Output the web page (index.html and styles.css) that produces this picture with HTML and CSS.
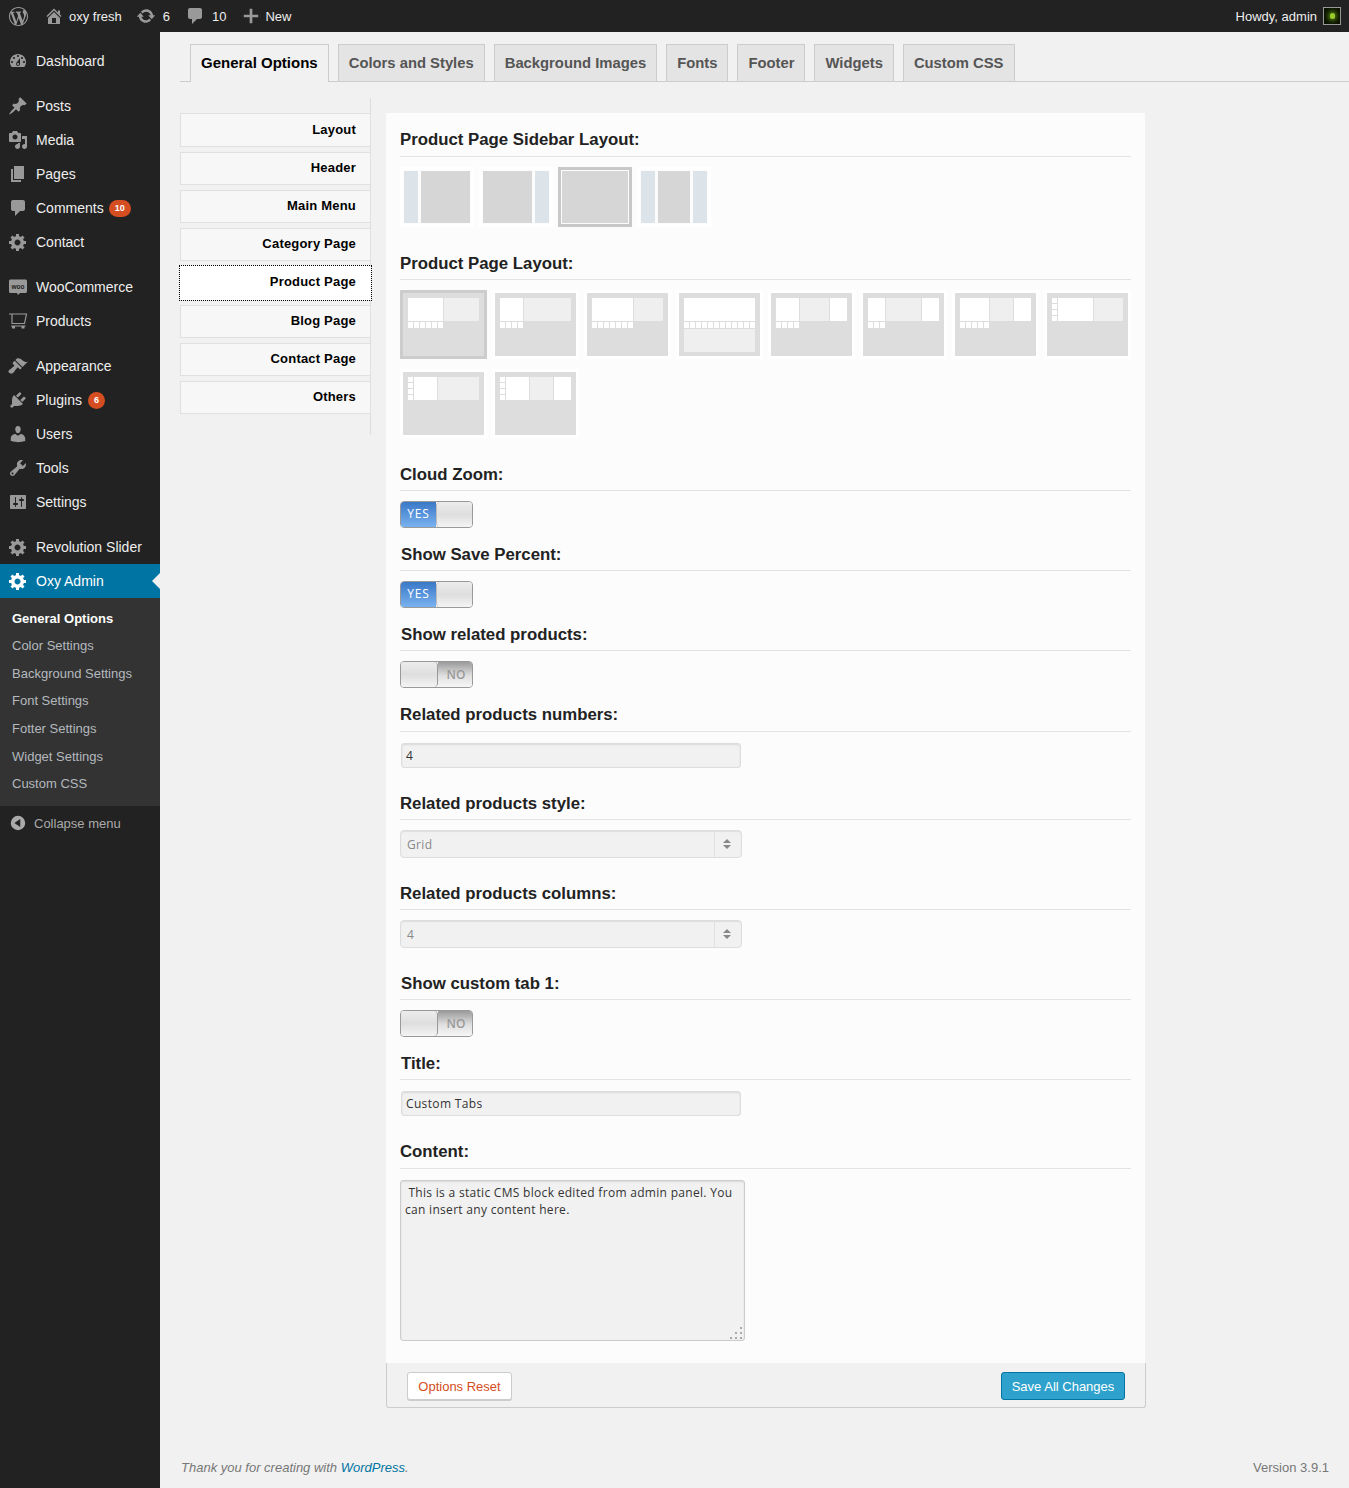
FILE: index.html
```html
<!DOCTYPE html>
<html lang="en">
<head>
<meta charset="utf-8">
<title>Oxy Admin</title>
<link rel="stylesheet" href="styles.css">
</head>
<body>
<svg class="defs" width="0" height="0" aria-hidden="true">
<symbol id="i-wp" viewBox="0 0 20 20"><path d="M20 10c0-5.51-4.49-10-10-10C4.48 0 0 4.49 0 10c0 5.52 4.48 10 10 10 5.51 0 10-4.48 10-10zM7.78 15.37L4.37 6.22c.55-.02 1.17-.08 1.17-.08.5-.06.44-1.13-.06-1.11 0 0-1.45.11-2.37.11-.18 0-.37 0-.58-.01C4.12 2.69 6.87 1.11 10 1.11c2.33 0 4.45.87 6.05 2.34-.68-.11-1.65.39-1.65 1.58 0 .74.45 1.36.9 2.1.35.61.55 1.36.55 2.46 0 1.49-1.4 5-1.4 5l-3.03-8.37c.54-.02.82-.17.82-.17.5-.05.44-1.25-.06-1.22 0 0-1.44.12-2.38.12-.87 0-2.33-.12-2.33-.12-.5-.03-.56 1.2-.06 1.22l.92.08 1.26 3.41zM17.41 10c.24-.64.74-1.87.43-4.25.7 1.29 1.05 2.71 1.05 4.25 0 3.29-1.73 6.24-4.4 7.78.97-2.59 1.94-5.2 2.92-7.78zM6.1 18.09C3.12 16.65 1.11 13.53 1.11 10c0-1.3.23-2.48.72-3.59C3.25 10.3 4.67 14.2 6.1 18.09zm4.03-6.63l2.58 6.98c-.86.29-1.76.45-2.71.45-.79 0-1.57-.11-2.29-.33.81-2.38 1.62-4.74 2.42-7.1z"/></symbol>
<symbol id="i-home" viewBox="0 0 20 20"><path d="M16 8.5l1.53 1.53-1.06 1.06L10 4.62l-6.47 6.47-1.06-1.06L10 2.5l4 4v-2h2v4zm-6-2.46l6 5.99V18H4v-5.97zM12 17v-5H8v5h4z"/></symbol>
<symbol id="i-update" viewBox="0 0 20 20"><path d="M10.2 3.28c3.53 0 6.43 2.61 6.92 6h2.08l-3.5 4-3.5-4h2.32c-.45-1.97-2.21-3.45-4.32-3.45-1.45 0-2.73.71-3.54 1.78L4.95 5.66C6.23 4.2 8.11 3.28 10.2 3.28zm-.4 13.44c-3.52 0-6.43-2.61-6.92-6H.8l3.5-4c1.17 1.33 2.33 2.67 3.5 4H5.48c.45 1.97 2.21 3.45 4.32 3.45 1.45 0 2.73-.71 3.54-1.78l1.71 1.95c-1.28 1.46-3.15 2.38-5.25 2.38z"/></symbol>
<symbol id="i-comment" viewBox="0 0 20 20"><path d="M5 2h10c1.1 0 2 .9 2 2v7c0 1.1-.9 2-2 2h-3l-5 5v-5H5c-1.1 0-2-.9-2-2V4c0-1.1.9-2 2-2z"/></symbol>
<symbol id="i-plus" viewBox="0 0 20 20"><path d="M18 8.5v3h-6.5V18h-3v-6.5H2v-3h6.500V2h3v6.500z"/></symbol>
<symbol id="i-dash" viewBox="0 0 20 20"><path d="M3.76 16h12.48c1.1-1.37 1.76-3.11 1.76-5 0-4.42-3.58-8-8-8s-8 3.58-8 8c0 1.89.66 3.63 1.76 5zM10 4c.55 0 1 .45 1 1s-.45 1-1 1-1-.45-1-1 .45-1 1-1zM6 6c.55 0 1 .45 1 1s-.45 1-1 1-1-.45-1-1 .45-1 1-1zm8 0c.55 0 1 .45 1 1s-.45 1-1 1-1-.45-1-1 .45-1 1-1zm-5.37 5.550L12 7v6c0 1.100-.9 2-2 2s-2-.9-2-2c0-.57.24-1.080.63-1.450zM4 10c.55 0 1 .45 1 1s-.45 1-1 1-1-.45-1-1 .45-1 1-1zm12 0c.55 0 1 .45 1 1s-.45 1-1 1-1-.45-1-1 .45-1 1-1zm-5 3c0-.55-.45-1-1-1s-1 .45-1 1 .45 1 1 1 1-.45 1-1z"/></symbol>
<symbol id="i-pin" viewBox="0 0 20 20"><path d="M10.44 3.020l1.820-1.820 6.360 6.350-1.830 1.820c-1.050-.68-2.480-.57-3.410.36l-.75.75c-.92.93-1.040 2.350-.35 3.410l-1.830 1.820-2.410-2.410-2.800 2.790c-.42.42-3.380 2.710-3.800 2.290s1.860-3.390 2.280-3.810l2.790-2.790L4.100 9.360l1.830-1.820c1.050.69 2.480.57 3.400-.36l.75-.75c.93-.92 1.050-2.350.36-3.410z"/></symbol>
<symbol id="i-media" viewBox="0 0 20 20"><path d="M13 11V4c0-.55-.45-1-1-1h-1.670L9 1H5L3.670 3H2c-.55 0-1 .45-1 1v7c0 .55.45 1 1 1h10c.55 0 1-.45 1-1zM7 4.500c1.380 0 2.500 1.120 2.500 2.500S8.380 9.500 7 9.500 4.500 8.380 4.500 7 5.620 4.500 7 4.500zM14 6h5v10.500c0 1.380-1.120 2.500-2.500 2.500S14 17.880 14 16.500s1.120-2.500 2.500-2.500c.17 0 .34.020.5.050V9h-3V6zm-4 8.050V13h2v3.500c0 1.380-1.120 2.500-2.500 2.500S7 17.880 7 16.500 8.120 14 9.500 14c.17 0 .34.020.5.050z"/></symbol>
<symbol id="i-page" viewBox="0 0 20 20"><path d="M6 15V2h10v13H6zm-1 1h8v2H3V5h2v11z"/></symbol>
<symbol id="i-gear" viewBox="0 0 20 20"><path d="M18 12h-2.180c-.17.7-.44 1.350-.81 1.930l1.540 1.540-2.100 2.100-1.540-1.540c-.58.36-1.230.63-1.910.79V19H8v-2.180c-.68-.16-1.330-.43-1.910-.79l-1.540 1.540-2.120-2.120 1.540-1.540c-.36-.58-.63-1.230-.79-1.910H1V9.030h2.170c.16-.7.44-1.350.8-1.940L2.430 5.550l2.100-2.100 1.540 1.540c.58-.37 1.240-.64 1.930-.81V2h3v2.180c.68.16 1.330.43 1.910.79l1.540-1.540 2.120 2.120-1.540 1.540c.36.59.64 1.240.8 1.940H18V12zm-8.500 1.500c1.660 0 3-1.340 3-3s-1.340-3-3-3-3 1.340-3 3 1.340 3 3 3z"/></symbol>
<symbol id="i-cart" viewBox="0 0 20 20"><path fill="none" stroke="currentColor" stroke-width="1.200" d="M1 3h3v9.500h12.500l2-9.500H4M3 15h14.500"/><rect x="4" y="15" width="3" height="2.500"/><rect x="13.500" y="15" width="3" height="2.500"/></symbol>
<symbol id="i-brush" viewBox="0 0 20 20"><path d="M14.480 11.060L7.410 3.990l1.500-1.500c.5-.56 2.300-.47 3.510.32 1.210.8 1.430 1.280 2.910 2.100 1.180.64 2.450 1.260 4.450.85zm-.71.71L6.700 4.700 4.930 6.470c-.39.39-.39 1.020 0 1.410l1.060 1.060c.39.39.39 1.030 0 1.420-.6.6-1.430 1.110-2.210 1.690-.35.26-.7.53-1.010.84C1.430 13.230.4 14.89.4 15.500c0 .83 1.270 2.100 3.100 2.100.76 0 2.040-1.130 3.070-2.440.28-.35.55-.71.8-1.070.59-.78 1.090-1.600 1.690-2.200.39-.39 1.030-.39 1.420 0l1.060 1.060c.39.39 1.020.39 1.410 0z"/></symbol>
<symbol id="i-plug" viewBox="0 0 20 20"><path d="M13.110 4.360L9.870 7.600 8 5.730l3.240-3.240c.35-.34 1.050-.2 1.560.32.52.51.66 1.210.31 1.550zm-8 1.770l.91-1.120 9.010 9.010-1.190.84c-.71.71-2.630 1.160-3.820 1.160H6.140L4.900 17.260c-.59.59-1.540.59-2.120 0-.59-.58-.59-1.530 0-2.120l1.240-1.240v-3.880c0-1.130.4-3.190 1.090-3.890zm7.260 3.970l3.240-3.240c.34-.35 1.040-.21 1.550.31.52.51.66 1.210.31 1.550l-3.240 3.250z"/></symbol>
<symbol id="i-user" viewBox="0 0 20 20"><path d="M10 9.250c-2.270 0-2.730-3.440-2.730-3.440C7 4.020 7.820 2 9.970 2c2.160 0 2.980 2.020 2.710 3.810 0 0-.41 3.440-2.680 3.440zm0 2.570L12.720 10c2.390 0 4.520 2.330 4.520 4.530v2.490s-3.650 1.130-7.240 1.130c-3.650 0-7.240-1.130-7.240-1.130v-2.490c0-2.250 1.940-4.480 4.470-4.480z"/></symbol>
<symbol id="i-tool" viewBox="0 0 20 20"><path d="M16.680 9.770c-1.340 1.340-3.300 1.670-4.950.99l-5.410 6.520c-.99.99-2.590.99-3.580 0s-.99-2.590 0-3.570l6.520-5.420c-.68-1.650-.35-3.610.99-4.950 1.280-1.280 3.120-1.620 4.720-1.060l-2.890 2.890 2.820 2.820 2.860-2.870c.53 1.580.18 3.390-1.080 4.650zM3.810 16.210c.4.39 1.040.39 1.430 0 .4-.4.4-1.040 0-1.430-.39-.4-1.030-.4-1.430 0-.39.39-.39 1.030 0 1.430z"/></symbol>
<symbol id="i-set" viewBox="0 0 20 20"><path d="M18 16V4c0-.55-.45-1-1-1H3c-.55 0-1 .45-1 1v12c0 .55.45 1 1 1h14c.55 0 1-.45 1-1zM8 11h1c.55 0 1 .45 1 1s-.45 1-1 1H8v1.500c0 .28-.22.5-.5.5s-.5-.22-.5-.5V13H6c-.55 0-1-.45-1-1s.45-1 1-1h1V5.500c0-.28.22-.5.5-.5s.5.22.5.5V11zm5-2h-1c-.55 0-1-.45-1-1s.45-1 1-1h1V5.500c0-.28.22-.5.5-.5s.5.22.5.5V7h1c.55 0 1 .45 1 1s-.45 1-1 1h-1v5.500c0 .28-.22.5-.5.5s-.5-.22-.5-.5V9z"/></symbol>
<symbol id="i-back" viewBox="0 0 20 20"><path fill-rule="evenodd" d="M10 2a8 8 0 1 1 0 16a8 8 0 0 1 0-16zM12.500 5.500L6 10l6.500 4.500z"/></symbol>
</svg>

<header class="topbar">
  <div class="top-left">
    <svg class="tb-icon tb-wp"><use href="#i-wp"/></svg>
    <span class="tb-item tb-site"><svg class="tb-icon"><use href="#i-home"/></svg>oxy fresh</span>
    <span class="tb-item tb-updates"><svg class="tb-icon"><use href="#i-update"/></svg>6</span>
    <span class="tb-item tb-comments"><svg class="tb-icon"><use href="#i-comment"/></svg>10</span>
    <span class="tb-item tb-new"><svg class="tb-icon"><use href="#i-plus"/></svg>New</span>
  </div>
  <div class="top-right">Howdy, admin<span class="avatar"><span class="avatar-dot"></span></span></div>
</header>

<div class="layout">
  <nav class="sidebar">
    <ul class="menu">
      <li class="mi"><svg class="mi-icon"><use href="#i-dash"/></svg>Dashboard</li>
      <li class="mi sep"><svg class="mi-icon"><use href="#i-pin"/></svg>Posts</li>
      <li class="mi"><svg class="mi-icon"><use href="#i-media"/></svg>Media</li>
      <li class="mi"><svg class="mi-icon"><use href="#i-page"/></svg>Pages</li>
      <li class="mi"><svg class="mi-icon"><use href="#i-comment"/></svg>Comments<span class="badge badge-wide">10</span></li>
      <li class="mi"><svg class="mi-icon"><use href="#i-gear"/></svg>Contact</li>
      <li class="mi sep"><svg class="mi-icon" viewBox="0 0 20 20"><path d="M2.500 2.500h15c.8 0 1.500.7 1.500 1.500v10.500c0 .8-.7 1.500-1.500 1.500H12l-2 2-1-2H2.500c-.8 0-1.500-.7-1.500-1.500V4c0-.8.7-1.500 1.500-1.500z"/><text class="woo-mark" x="10" y="11.500" text-anchor="middle">woo</text></svg>WooCommerce</li>
      <li class="mi"><svg class="mi-icon"><use href="#i-cart"/></svg>Products</li>
      <li class="mi sep"><svg class="mi-icon"><use href="#i-brush"/></svg>Appearance</li>
      <li class="mi"><svg class="mi-icon"><use href="#i-plug"/></svg>Plugins<span class="badge">6</span></li>
      <li class="mi"><svg class="mi-icon"><use href="#i-user"/></svg>Users</li>
      <li class="mi"><svg class="mi-icon"><use href="#i-tool"/></svg>Tools</li>
      <li class="mi"><svg class="mi-icon"><use href="#i-set"/></svg>Settings</li>
      <li class="mi sep"><svg class="mi-icon"><use href="#i-gear"/></svg>Revolution Slider</li>
      <li class="mi mi-current"><svg class="mi-icon"><use href="#i-gear"/></svg>Oxy Admin</li>
    </ul>
    <ul class="submenu">
      <li class="sub sub-current">General Options</li>
      <li class="sub">Color Settings</li>
      <li class="sub">Background Settings</li>
      <li class="sub">Font Settings</li>
      <li class="sub">Fotter Settings</li>
      <li class="sub">Widget Settings</li>
      <li class="sub">Custom CSS</li>
    </ul>
    <div class="collapse"><svg class="collapse-icon"><use href="#i-back"/></svg>Collapse menu</div>
  </nav>

  <main class="main">
    <div class="tabs">
      <span class="tab tab-active">General Options</span>
      <span class="tab">Colors and Styles</span>
      <span class="tab">Background Images</span>
      <span class="tab">Fonts</span>
      <span class="tab">Footer</span>
      <span class="tab">Widgets</span>
      <span class="tab">Custom CSS</span>
    </div>

    <div class="panels">
      <ul class="vtabs">
        <li class="vtab vtab-first">Layout</li>
        <li class="vtab">Header</li>
        <li class="vtab">Main Menu</li>
        <li class="vtab">Category Page</li>
        <li class="vtab vtab-active">Product Page</li>
        <li class="vtab">Blog Page</li>
        <li class="vtab">Contact Page</li>
        <li class="vtab">Others</li>
      </ul>

      <div class="content">
        <div class="card">
          <section class="field gap-19">
            <h3 class="label label-up">Product Page Sidebar Layout:</h3>
            <div class="side-tiles">
              <div class="stile"><span class="sb"></span><span class="mainc w49"></span></div>
              <div class="stile"><span class="mainc w49"></span><span class="sb"></span></div>
              <div class="stile stile-on"><span class="mainc w66"></span></div>
              <div class="stile"><span class="sb"></span><span class="mainc w32"></span><span class="sb"></span></div>
            </div>
          </section>

          <section class="field gap-19">
            <h3 class="label">Product Page Layout:</h3>
            <div class="layout-tiles">
              <div class="ltile ltile-on">
                <div class="lrow"><span class="pw w35"></span><span class="pl w35"></span></div>
                <div class="thumbs w35"></div>
              </div>
              <div class="ltile">
                <div class="lrow"><span class="pw w23"></span><span class="pl w47"></span></div>
                <div class="thumbs w23"></div>
              </div>
              <div class="ltile">
                <div class="lrow"><span class="pw w41"></span><span class="pl w29"></span></div>
                <div class="thumbs w41"></div>
              </div>
              <div class="ltile">
                <div class="lrow"><span class="pw w71"></span></div>
                <div class="thumbs w71"></div>
                <div class="lrow"><span class="pl w71"></span></div>
              </div>
              <div class="ltile">
                <div class="lrow"><span class="pw w23"></span><span class="pl w29"></span><span class="pw w17"></span></div>
                <div class="thumbs w23"></div>
              </div>
              <div class="ltile">
                <div class="lrow"><span class="pw w17"></span><span class="pl w35"></span><span class="pw w17"></span></div>
                <div class="thumbs w17"></div>
              </div>
              <div class="ltile">
                <div class="lrow"><span class="pw w29"></span><span class="pl w23"></span><span class="pw w17"></span></div>
                <div class="thumbs w29"></div>
              </div>
              <div class="ltile">
                <div class="lrow"><span class="vthumbs"></span><span class="pw w35"></span><span class="pl w29"></span></div>
              </div>
              <div class="ltile">
                <div class="lrow"><span class="vthumbs"></span><span class="pw w23"></span><span class="pl w41"></span></div>
              </div>
              <div class="ltile">
                <div class="lrow"><span class="vthumbs"></span><span class="pw w23"></span><span class="pl w23"></span><span class="pw w17"></span></div>
              </div>
            </div>
          </section>

          <section class="field gap-9">
            <h3 class="label">Cloud Zoom:</h3>
            <div class="toggle toggle-yes"><span class="t-yes">YES</span><span class="t-knob"></span></div>
          </section>
          <section class="field gap-9">
            <h3 class="label label-in">Show Save Percent:</h3>
            <div class="toggle toggle-yes"><span class="t-yes">YES</span><span class="t-knob"></span></div>
          </section>
          <section class="field gap-10">
            <h3 class="label label-in">Show related products:</h3>
            <div class="toggle toggle-no"><span class="t-knob"></span><span class="t-no">NO</span></div>
          </section>
          <section class="field gap-18">
            <h3 class="label label-up">Related products numbers:</h3>
            <input class="text-input" type="text" value="4" readonly>
          </section>
          <section class="field gap-18">
            <h3 class="label">Related products style:</h3>
            <div class="select"><span class="select-val">Grid</span><span class="select-arrows"></span></div>
          </section>
          <section class="field gap-18">
            <h3 class="label">Related products columns:</h3>
            <div class="select"><span class="select-val">4</span><span class="select-arrows"></span></div>
          </section>
          <section class="field gap-9">
            <h3 class="label label-in">Show custom tab 1:</h3>
            <div class="toggle toggle-no"><span class="t-knob"></span><span class="t-no">NO</span></div>
          </section>
          <section class="field gap-19">
            <h3 class="label label-in">Title:</h3>
            <input class="text-input" type="text" value="Custom Tabs" readonly>
          </section>
          <section class="field">
            <h3 class="label label-up">Content:</h3>
            <textarea class="textarea" readonly> This is a static CMS block edited from admin panel. You can insert any content here.</textarea>
          </section>
        </div>
        <div class="actions">
          <button class="btn btn-reset" type="button">Options Reset</button>
          <button class="btn btn-save" type="button">Save All Changes</button>
        </div>
      </div>
    </div>

    <footer class="page-foot">
      <em class="thanks">Thank you for creating with <a href="#" class="wp-link">WordPress</a>.</em>
      <span class="version">Version 3.9.1</span>
    </footer>
  </main>
</div>
</body>
</html>
```
FILE: styles.css
```css
* { box-sizing: border-box; }
html, body { margin: 0; padding: 0; }
body {
  font-family: "Liberation Sans", Arial, sans-serif;
  font-size: 13px;
  color: #444;
  background: #f1f1f1;
  height: 1488px;
  overflow: hidden;
}
ul { list-style: none; margin: 0; padding: 0; }
.defs { display: block; height: 0; }

/* top bar */
.topbar {
  height: 32px;
  background: #222;
  color: #eee;
  display: flex;
  align-items: center;
  justify-content: space-between;
  font-size: 13px;
  padding: 0 8px 0 9px;
}
.top-left { display: flex; align-items: center; }
.tb-item { display: flex; align-items: center; }
.tb-icon { width: 20px; height: 20px; fill: #999; color: #999; flex: none; }
.tb-wp { width: 19px; height: 19px; margin-right: 16px; }
.tb-site .tb-icon { margin-right: 5px; }
.tb-site { margin-right: 14px; }
.tb-updates .tb-icon { margin-right: 7px; }
.tb-updates { margin-right: 15px; }
.tb-comments .tb-icon { margin-right: 7px; }
.tb-comments { margin-right: 16px; }
.tb-new .tb-icon { width: 18px; height: 18px; margin-right: 5px; }
.top-right { display: flex; align-items: center; }
.avatar {
  width: 18px;
  height: 18px;
  margin-left: 6px;
  border: 1px solid #999;
  background: #0a1200;
  display: flex;
  align-items: center;
  justify-content: center;
}
.avatar-dot {
  width: 5px;
  height: 6px;
  border-radius: 3px;
  background: #9ccc2c;
  box-shadow: 0 0 4px 2px #4e7a10;
}

/* layout */
.layout { display: flex; height: 1456px; }
.sidebar { width: 160px; flex: none; background: #222; padding-top: 12px; color: #eee; }

.mi {
  position: relative;
  display: flex;
  align-items: center;
  height: 34px;
  padding-left: 8px;
  font-size: 14px;
  color: #eee;
}
.mi.sep { margin-top: 11px; }
.mi-icon { width: 20px; height: 20px; margin-right: 8px; fill: #999; color: #999; flex: none; }
.woo-mark { font-family: "Liberation Sans", sans-serif; font-size: 6.5px; font-weight: 700; fill: #222; }
.mi-current { background: #0074a2; color: #fff; }
.mi-current .mi-icon { fill: #fff; color: #fff; }
.mi-current::after {
  content: "";
  position: absolute;
  right: 0;
  top: 9px;
  border: 8px solid transparent;
  border-left-width: 0;
  border-right-color: #f1f1f1;
}
.badge {
  display: inline-block;
  margin-left: 6px;
  width: 17px;
  height: 17px;
  line-height: 17px;
  border-radius: 9px;
  background: #d54e21;
  color: #fff;
  font-size: 9px;
  font-weight: 700;
  text-align: center;
}
.badge-wide { width: 22px; margin-left: 5px; }

.submenu { background: #333; padding: 6.5px 0 7.5px; }
.sub {
  height: 27.67px;
  line-height: 27.67px;
  padding-left: 12px;
  font-size: 13px;
  color: #b4b9be;
}
.sub-current { color: #fff; font-weight: 700; }
.collapse {
  display: flex;
  align-items: center;
  height: 35px;
  padding-left: 9px;
  font-size: 13px;
  color: #aaa;
}
.collapse-icon { width: 18px; height: 18px; margin-right: 7px; fill: #aaa; flex: none; }

/* main */
.main { flex: 1; min-width: 0; padding-top: 12px; display: flex; flex-direction: column; }
.tabs {
  display: flex;
  align-items: flex-end;
  height: 38px;
  margin-left: 20px;
  padding-left: 10px;
  border-bottom: 1px solid #ccc;
  gap: 9px;
}
.tab {
  height: 37px;
  line-height: 36px;
  padding: 0 10px;
  border: 1px solid #ccc;
  border-bottom: 0;
  background: #e4e4e4;
  color: #555;
  font-size: 14.8px;
  font-weight: 700;
}
.tab-active {
  background: #f1f1f1;
  color: #000;
  height: 38px;
  line-height: 36px;
  margin-bottom: -1px;
  font-size: 15px;
}

.panels { display: flex; align-items: flex-start; margin: 16px 0 0 20px; gap: 15px; }
.vtabs {
  width: 191px;
  flex: none;
  padding: 15px 0 21px;
  border-right: 1px solid #ddd;
  display: flex;
  flex-direction: column;
  gap: 5px;
}
.vtab {
  height: 33.15px;
  line-height: 30px;
  margin-right: -1px;
  padding-right: 14px;
  border: 1px solid #e0e0e0;
  background: #f7f7f7;
  color: #000;
  font-size: 13px;
  font-weight: 700;
  text-align: right;
  letter-spacing: .2px;
}
.vtab-first { height: 34px; line-height: 31px; }
.vtab-active { background: #fff; border-color: #fff; outline: 1px dotted #000; }

.content { width: 760px; flex: none; margin-top: 15px; }
.card { background: #fcfcfc; width: 759px; padding: 10px 14px 0; height: 1250px; }
.field { display: block; }
.gap-9 { margin-bottom: 9px; }
.gap-10 { margin-bottom: 10px; }
.gap-18 { margin-bottom: 18px; }
.gap-19 { margin-bottom: 19px; }
.label {
  margin: 0 0 10px;
  height: 34px;
  line-height: 35px;
  border-bottom: 1px solid #e3e3e3;
  font-size: 16.8px;
  font-weight: 700;
  color: #222;
}
.label-up { line-height: 33px; }
.label-in { padding-left: 1px; }

/* tiles */
.side-tiles { display: flex; gap: 5px; }
.stile {
  width: 74px;
  height: 60px;
  padding: 1px;
  border: 3px solid #fff;
  display: flex;
  gap: 3px;
}
.stile-on { border-color: #c8c8c8; }
.sb { width: 14px; background: #dce4e9; }
.mainc { background: #d6d6d6; }
.w49 { width: 49px; }
.w66 { width: 66px; }
.w32 { width: 32px; }

.layout-tiles { display: flex; flex-wrap: wrap; gap: 10px 5px; }
.ltile {
  width: 87px;
  height: 69px;
  padding: 5px;
  border: 3px solid #fff;
  background: #ddd;
  background-clip: padding-box;
  display: flex;
  flex-direction: column;
  gap: 1px;
}
.ltile-on { border-color: #ccc; }
.lrow { display: flex; gap: 1px; height: 23px; }
.pw { background: #fff; height: 23px; }
.pl { background: #efefef; height: 23px; }
.w17 { width: 17px; }
.w23 { width: 23px; }
.w29 { width: 29px; }
.w35 { width: 35px; }
.w41 { width: 41px; }
.w47 { width: 47px; }
.w71 { width: 71px; }
.thumbs { height: 6px; flex: none; background: repeating-linear-gradient(90deg, #fff 0, #fff 5px, #ddd 5px, #ddd 6px); }
.vthumbs { width: 5px; height: 23px; background: repeating-linear-gradient(180deg, #fff 0, #fff 5px, #ddd 5px, #ddd 6px); }

/* toggles */
.toggle {
  width: 73px;
  height: 27px;
  border: 1px solid #999;
  border-radius: 4px;
  display: flex;
  overflow: hidden;
  font-family: "Open Sans", sans-serif;
  font-size: 12px;
}
.t-yes {
  width: 35px;
  background: linear-gradient(#3a78c8, #7ab2ef);
  color: #fff;
  line-height: 24px;
  letter-spacing: .8px;
  text-align: center;
}
.t-knob { flex: 1; background: linear-gradient(#ececec, #dedede 50%, #f4f4f4); }
.toggle-yes .t-knob { border-left: 1px solid #bbb; border-radius: 4px 0 0 4px; }
.toggle-no .t-knob { border-right: 1px solid #999; border-radius: 0 4px 4px 0; }
.t-no {
  width: 34px;
  padding-left: 2px;
  background: linear-gradient(#9a9a9a, #e0e0e0 55%, #f6f6f6);
  color: #999;
  font-weight: 600;
  line-height: 26px;
  text-align: center;
}

/* inputs */
.text-input {
  display: block;
  width: 340px;
  height: 25px;
  margin: 11px 0 0 1px;
  padding: 0 4px;
  border: 1px solid #ddd;
  border-radius: 3px;
  background: #f1f1f1;
  box-shadow: inset 0 1px 2px rgba(0,0,0,.1);
  font-family: "Open Sans", sans-serif;
  font-size: 12px;
  letter-spacing: .35px;
  color: #333;
  outline: 0;
}
.select {
  display: flex;
  align-items: center;
  width: 342px;
  height: 28px;
  border: 1px solid #ddd;
  border-radius: 4px;
  background: #f1f1f1;
  box-shadow: inset 0 1px 1px rgba(0,0,0,.08);
  font-family: "Open Sans", sans-serif;
  font-size: 12px;
  letter-spacing: .35px;
  color: #888;
}
.select-val { flex: 1; padding-left: 6px; }
.select-arrows {
  position: relative;
  width: 27px;
  height: 100%;
  border-left: 1px solid #e0e0e0;
}
.select-arrows::before, .select-arrows::after {
  content: "";
  position: absolute;
  left: 8px;
  border: 4px solid transparent;
}
.select-arrows::before { top: 8px; border-top-width: 0; border-bottom: 4px solid #888; }
.select-arrows::after { top: 14px; border-bottom-width: 0; border-top: 4px solid #888; }
.textarea {
  display: block;
  width: 345px;
  height: 161px;
  margin: 11px 0 0;
  padding: 3px 4px;
  border: 1px solid #ccc;
  border-radius: 3px;
  background: #f1f1f1;
  box-shadow: inset 0 1px 2px rgba(0,0,0,.1);
  font-family: "Open Sans", sans-serif;
  font-size: 12px;
  letter-spacing: .3px;
  line-height: 17px;
  color: #333;
  outline: 0;
}
.textarea::-webkit-resizer {
  background-color: transparent;
  background-image:
    linear-gradient(#aaa, #aaa), linear-gradient(#aaa, #aaa), linear-gradient(#aaa, #aaa),
    linear-gradient(#aaa, #aaa), linear-gradient(#aaa, #aaa), linear-gradient(#aaa, #aaa);
  background-size: 2px 2px;
  background-repeat: no-repeat;
  background-position: 11px 2px, 6px 7px, 11px 7px, 1px 12px, 6px 12px, 11px 12px;
}

/* actions */
.actions {
  display: flex;
  justify-content: space-between;
  height: 45px;
  padding: 9px 20px 0;
  border: 1px solid #ccc;
  border-top: 0;
  border-radius: 0 0 3px 3px;
  background: #f1f1f1;
}
.btn {
  height: 28px;
  padding: 0;
  border-radius: 3px;
  font-family: "Liberation Sans", Arial, sans-serif;
  font-size: 13px;
}
.btn-reset { width: 105px; background: #fff; border: 1px solid #ccc; color: #d54e21; box-shadow: 0 1px 0 #ccc; }
.btn-save { width: 124px; background: #2ea2cc; border: 1px solid #0074a2; color: #fff; }

/* page foot */
.page-foot {
  display: flex;
  justify-content: space-between;
  align-items: center;
  margin-top: 52px;
  padding: 0 20px 0 21px;
  font-size: 13px;
  color: #777;
}
.thanks { font-style: italic; }
.wp-link { color: #0074a2; text-decoration: none; }
```
